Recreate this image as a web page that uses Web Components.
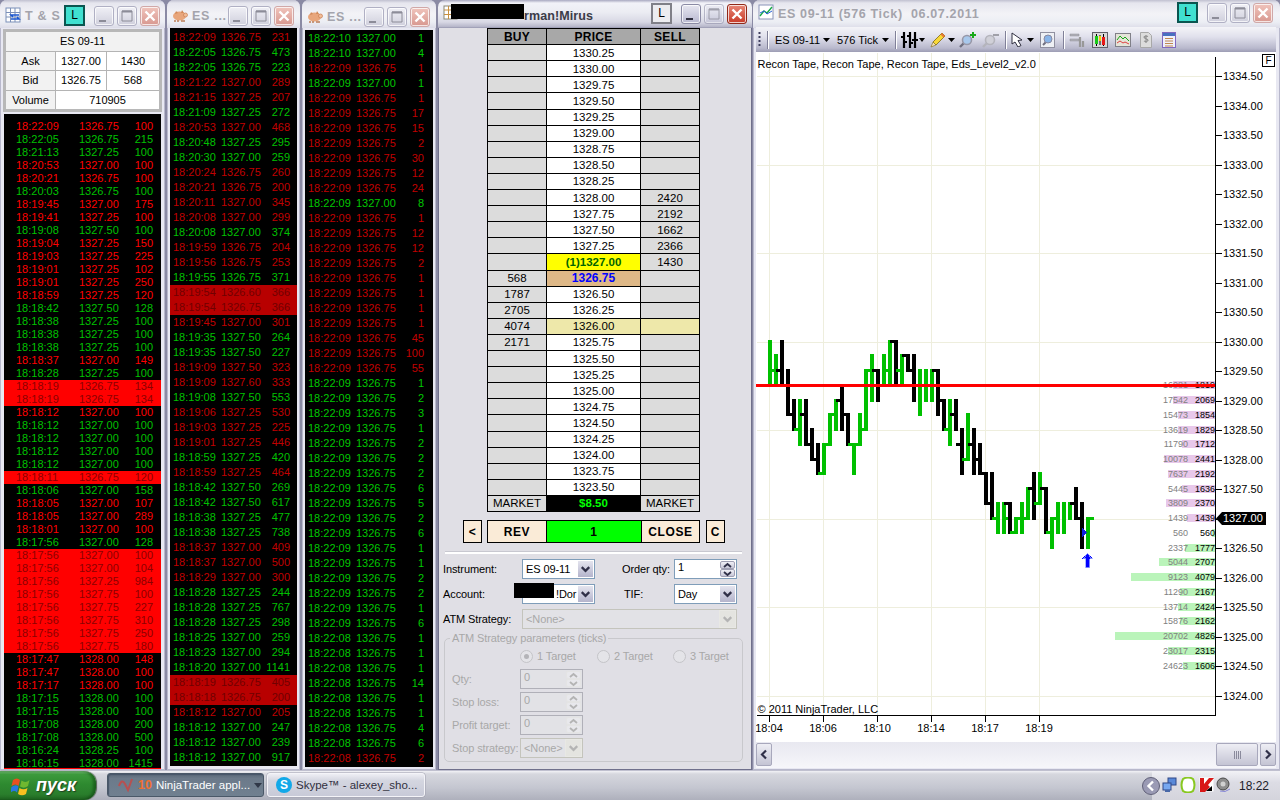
<!DOCTYPE html>
<html lang="ru">
<head>
<meta charset="utf-8">
<title>NinjaTrader</title>
<style>
html,body{margin:0;padding:0;width:1280px;height:800px;overflow:hidden;background:#8a8aa4;font:11px "Liberation Sans",Arial,sans-serif}
#desk{display:flex;height:770px;width:1280px}
</style>
</head>
<body>
<div id="desk">
  <nt-window style="--w:165px;--cap-right:5px;--btn-top:6px;--ls:.7px;--tt:1px" l="cyan" text="T &amp; S">
    <svg slot="icon" width="16" height="16" viewBox="0 0 16 16"><rect x="1" y="1" width="14" height="14" fill="#fff" stroke="#7b8fb8"/><path d="M1 5.500h14M1 10h14M5.500 1v14M10 1v14" stroke="#7b8fb8"/><path d="M6 12h8l-2-2M14 8H6l2 2" stroke="#1a56d0" stroke-width="1.600" fill="none"/></svg>
    <nt-quote></nt-quote>
    <nt-tape src="t1" style="--ml:4px;--mt:2px;--tw:157px;--th:655px;--pl:12px;--pr:8px;--tc:63px;--rh:13px;--pt:6px;--red:#f00;--green:#00c000;--hlb:#f00;--hlf:#8c0000;--bb:1px solid #f00"></nt-tape>
  </nt-window>
  <nt-window style="--w:133px;--cap-right:6px;--btn-top:6px;--ml:2px;--ls:.7px;--tt:1px" text="ES ...">
    <svg slot="icon" width="16" height="16" viewBox="0 0 16 16"><ellipse cx="7.500" cy="9" rx="6.500" ry="4.500" fill="#e8a67c"/><path d="M10 3l2 3-3 0zM4 4l2 2-3 1z" fill="#d08858"/><ellipse cx="13.500" cy="8" rx="2" ry="2" fill="#f2bd98" stroke="#c77c50" stroke-width=".7"/><path d="M3 13v2M6 13v2M10 13v2M12 13v2" stroke="#b8754c" stroke-width="1.400"/></svg>
    <nt-tape src="t2" style="--ml:3px;--mt:0px;--tw:127px;--th:738px;--pl:3px;--pr:7px;--tc:48px;--rh:15px;--pt:1.500px;--red:#c00000;--green:#00c000;--hlb:#b80000;--hlf:#700000"></nt-tape>
  </nt-window>
  <nt-window style="--w:134px;--cap-right:6px;--btn-top:7px;--ml:2px;--ls:.7px;--tt:1px" text="ES ...">
    <svg slot="icon" width="16" height="16" viewBox="0 0 16 16"><ellipse cx="7.500" cy="9" rx="6.500" ry="4.500" fill="#e8a67c"/><path d="M10 3l2 3-3 0zM4 4l2 2-3 1z" fill="#d08858"/><ellipse cx="13.500" cy="8" rx="2" ry="2" fill="#f2bd98" stroke="#c77c50" stroke-width=".7"/><path d="M3 13v2M6 13v2M10 13v2M12 13v2" stroke="#b8754c" stroke-width="1.400"/></svg>
    <nt-tape src="t3" style="--ml:3px;--mt:2px;--tw:128px;--th:737px;--pl:3px;--pr:9px;--tc:48px;--rh:15px;--pt:.5px;--red:#c00000;--green:#00c800"></nt-tape>
  </nt-window>
  <nt-window active style="--w:314px;--cap-right:5px;--btn-top:4px;--ml:2px;--body:#e0dfe5;--tt:0px" l="plain">
    <svg slot="icon" width="16" height="16" viewBox="0 0 16 16"><rect x="1" y="1" width="13" height="13" fill="#fff" stroke="#887"/><path d="M1 5h13M1 9.500h13M5.500 1v13M10 1v13" stroke="#c89040"/></svg>
    <span slot="title" style="display:inline-block;vertical-align:top"><span style="display:inline-block;width:73px;height:15px;background:#000;margin-left:-12px;vertical-align:1px"></span>rman!Mirus</span>
    <nt-ladder></nt-ladder>
    <nt-order></nt-order>
  </nt-window>
  <nt-window style="--w:527px;--cap-right:7px;--btn-top:3px;--ml:1px;--ls:.65px;--tt:2px" l="cyan" text="ES 09-11 (576 Tick)  06.07.2011" >
    <svg slot="icon" width="16" height="16" viewBox="0 0 16 16"><rect x="1" y="1" width="14" height="14" fill="#fff" stroke="#8a94b8"/><path d="M2 12l4-5 3 2 5-6" stroke="#18a848" stroke-width="1.400" fill="none"/><path d="M2 9l4-2 3 3 5-3" stroke="#2860d8" fill="none"/></svg>
    <nt-chart></nt-chart>
  </nt-window>
</div>
<nt-taskbar></nt-taskbar>

<script>
const DATA={
t1:`18:22:09 1326.75 100 r|18:22:05 1326.75 215 g|18:21:13 1327.25 100 g|18:20:53 1327.00 100 r|18:20:21 1326.75 100 r|18:20:03 1326.75 100 g|18:19:45 1327.00 175 r|18:19:41 1327.25 100 r|18:19:08 1327.50 100 g|18:19:04 1327.25 150 r|18:19:03 1327.25 225 r|18:19:01 1327.25 102 r|18:19:01 1327.25 250 r|18:18:59 1327.25 120 r|18:18:42 1327.50 128 g|18:18:38 1327.25 100 g|18:18:38 1327.25 100 g|18:18:38 1327.25 100 g|18:18:37 1327.00 149 r|18:18:28 1327.25 100 g|18:18:19 1326.75 134 h|18:18:19 1326.75 134 h|18:18:12 1327.00 100 r|18:18:12 1327.00 100 g|18:18:12 1327.00 100 g|18:18:12 1327.00 100 g|18:18:12 1327.00 100 g|18:18:11 1326.75 120 h|18:18:06 1327.00 158 g|18:18:05 1327.00 107 r|18:18:05 1327.00 289 r|18:18:01 1327.00 100 r|18:17:56 1327.00 128 g|18:17:56 1327.00 100 h|18:17:56 1327.00 104 h|18:17:56 1327.25 984 h|18:17:56 1327.75 100 h|18:17:56 1327.75 227 h|18:17:56 1327.75 310 h|18:17:56 1327.75 250 h|18:17:56 1327.75 180 h|18:17:47 1328.00 148 r|18:17:47 1328.00 100 r|18:17:17 1328.00 100 r|18:17:15 1328.00 100 g|18:17:15 1328.00 100 g|18:17:08 1328.00 200 g|18:17:08 1328.00 500 g|18:16:24 1328.25 100 g|18:16:15 1328.00 1415 g`,
t2:`18:22:09 1326.75 231 r|18:22:05 1326.75 473 g|18:22:05 1326.75 223 g|18:21:22 1327.00 289 r|18:21:15 1327.25 207 r|18:21:09 1327.25 272 g|18:20:53 1327.00 468 r|18:20:48 1327.25 295 g|18:20:30 1327.00 259 g|18:20:24 1326.75 260 r|18:20:21 1326.75 200 r|18:20:11 1327.00 345 r|18:20:08 1327.00 299 r|18:20:08 1327.00 374 g|18:19:59 1326.75 204 r|18:19:56 1326.75 253 r|18:19:55 1326.75 371 g|18:19:54 1326.60 366 h|18:19:54 1326.75 366 h|18:19:45 1327.00 301 r|18:19:35 1327.50 264 g|18:19:35 1327.50 227 g|18:19:09 1327.50 323 r|18:19:09 1327.60 333 r|18:19:08 1327.50 553 g|18:19:06 1327.25 530 r|18:19:03 1327.25 225 r|18:19:01 1327.25 446 r|18:18:59 1327.25 420 g|18:18:59 1327.25 464 r|18:18:42 1327.50 269 g|18:18:42 1327.50 617 g|18:18:38 1327.25 477 g|18:18:38 1327.25 738 g|18:18:37 1327.00 409 r|18:18:37 1327.00 500 r|18:18:29 1327.00 300 r|18:18:28 1327.25 244 g|18:18:28 1327.25 767 g|18:18:28 1327.25 298 g|18:18:25 1327.00 259 g|18:18:23 1327.00 294 g|18:18:20 1327.00 1141 g|18:18:19 1326.75 405 h|18:18:18 1326.75 200 h|18:18:12 1327.00 205 r|18:18:12 1327.00 247 g|18:18:12 1327.00 239 g|18:18:12 1327.00 917 g`,
t3:`18:22:10 1327.00 1 g|18:22:10 1327.00 4 g|18:22:09 1326.75 1 r|18:22:09 1327.00 1 g|18:22:09 1326.75 1 r|18:22:09 1326.75 17 r|18:22:09 1326.75 15 r|18:22:09 1326.75 2 r|18:22:09 1326.75 30 r|18:22:09 1326.75 12 r|18:22:09 1326.75 24 r|18:22:09 1327.00 8 g|18:22:09 1326.75 1 r|18:22:09 1326.75 12 r|18:22:09 1326.75 12 r|18:22:09 1326.75 2 r|18:22:09 1326.75 1 r|18:22:09 1326.75 1 r|18:22:09 1326.75 1 r|18:22:09 1326.75 1 r|18:22:09 1326.75 45 r|18:22:09 1326.75 100 r|18:22:09 1326.75 55 r|18:22:09 1326.75 1 g|18:22:09 1326.75 2 g|18:22:09 1326.75 3 g|18:22:09 1326.75 1 g|18:22:09 1326.75 2 g|18:22:09 1326.75 2 g|18:22:09 1326.75 2 g|18:22:09 1326.75 6 g|18:22:09 1326.75 5 g|18:22:09 1326.75 2 g|18:22:09 1326.75 6 g|18:22:09 1326.75 1 g|18:22:09 1326.75 1 g|18:22:09 1326.75 2 g|18:22:09 1326.75 2 g|18:22:09 1326.75 1 g|18:22:09 1326.75 6 g|18:22:08 1326.75 1 g|18:22:08 1326.75 1 g|18:22:08 1326.75 1 g|18:22:08 1326.75 14 g|18:22:08 1326.75 1 g|18:22:08 1326.75 1 g|18:22:08 1326.75 4 g|18:22:08 1326.75 6 g|18:22:08 1326.75 2 r`
};

class NtWindow extends HTMLElement{
  constructor(){super();this.attachShadow({mode:'open'});}
  connectedCallback(){
    const active=this.hasAttribute('active');
    const l=this.getAttribute('l');
    const text=this.getAttribute('text')||'';
    const lBtn=l?`<div class="l ${l}">L</div>`:'';
    this.shadowRoot.innerHTML=`<style>
      :host{display:flex;flex-direction:column;flex:none;box-sizing:border-box;width:var(--w);height:770px;margin-left:var(--ml,0);background:var(--body,#e8e8f2);border-radius:7px 7px 0 0;overflow:hidden;box-shadow:inset 0 0 0 1px ${active?'#70708c':'#b8b8cc'};font:11px "Liberation Sans",Arial,sans-serif;color:#000}
      .bar{flex:none;height:28px;box-sizing:border-box;display:flex;align-items:flex-start;padding:var(--btn-top) var(--cap-right) 0 5px;background:${active?'linear-gradient(#a8a8c0 0,#f2f2f8 3px,#ecedf3 12px,#d8d8e4 22px,#b4b4c8 27px,#8f8fa8 28px)':'linear-gradient(#c0c0d0 0,#e6e6ee 3px,#f3f3f7 14px,#eceef4 22px,#dcdce8 28px)'}}
      .ico{flex:none;width:16px;height:16px;margin:1px 4px 0 0;display:block}
      ::slotted(svg){display:block}
      .t{flex:1;min-width:0;margin-top:var(--tt,0);font:bold 12.5px/18px "Liberation Sans",Arial,sans-serif;letter-spacing:var(--ls,.1px);color:${active?'#3c3c48':'#a4a4ac'};white-space:pre;overflow:visible}
      .l{flex:none;box-sizing:border-box;width:21px;height:21px;margin:-1px 6px 0 0;text-align:center;font:12px/17px "Liberation Sans",Arial,sans-serif;border:2px solid #808088;background:#ececf0;color:#000}
      .l.cyan{background:#40e0d0;border-color:#0a5550}
      .b{flex:none;box-sizing:border-box;width:20px;height:20px;margin-left:3px;border-radius:3px;position:relative;border:1px solid ${active?'#8a8aa4':'#b0b0c4'};background:${active?'linear-gradient(#e6e6f0,#b8b8d0)':'linear-gradient(#f0f0f6,#cfcfdc)'};box-shadow:inset 0 0 0 1px rgba(255,255,255,.75)}
      .b svg{position:absolute;left:1px;top:1px}
      .c{border-color:${active?'#902818':'#d0a8a8'};background:${active?'linear-gradient(#e88878,#c83a28)':'linear-gradient(#f0c4bc,#d89890)'}}
      .m.off{opacity:.55}
      .content{flex:1;min-height:0;display:flex;flex-direction:column}
      </style>
      <div class="bar">
        <div class="ico"><slot name="icon"></slot></div>
        <div class="t"><slot name="title">${text.replace(/&/g,'&amp;')}</slot></div>
        ${lBtn}
        <div class="b"><svg width="16" height="16"><rect x="3" y="12" width="7" height="2" fill="${active?'#303040':'#8c8c98'}"/></svg></div>
        <div class="b m ${active?'off':''}"><svg width="16" height="16"><path d="M3 3h10v10H3z" fill="none" stroke="${active?'#606070':'#8c8c98'}"/><path d="M3 3.500h10" stroke="${active?'#606070':'#8c8c98'}" stroke-width="2"/></svg></div>
        <div class="b c"><svg width="16" height="16"><path d="M3.500 3.500l9 9M12.500 3.500l-9 9" stroke="#fff" stroke-width="2.400"/></svg></div>
      </div>
      <div class="content"><slot></slot></div>`;
  }
}
customElements.define('nt-window',NtWindow);

class NtQuote extends HTMLElement{
  constructor(){super();this.attachShadow({mode:'open'}).innerHTML=`<style>
    :host{display:block;flex:none;box-sizing:border-box;width:159px;height:83px;margin:1px 0 0 3px;border:3px solid #b8b8b8;box-shadow:inset 0 0 0 1px #e8e8e8;font:11px "Liberation Sans",Arial,sans-serif}
    .g{display:grid;grid-template-columns:49px 50px 1fr;grid-template-rows:repeat(4,1fr);gap:1px;background:#b4b4b4;height:100%;padding:0 0 0 0}
    .g div{display:flex;align-items:center;justify-content:center;background:#fff;color:#000;white-space:nowrap}
    .g .h{background:#f2f2f2}.s3{grid-column:1/4}.s2{grid-column:2/4}
    </style><div class="g">
    <div class="h s3">ES 09-11</div>
    <div class="h">Ask</div><div>1327.00</div><div>1430</div>
    <div class="h">Bid</div><div>1326.75</div><div>568</div>
    <div class="h">Volume</div><div class="s2">710905</div></div>`;}
}
customElements.define('nt-quote',NtQuote);

class NtTape extends HTMLElement{
  constructor(){super();this.attachShadow({mode:'open'});}
  connectedCallback(){
    const rows=DATA[this.getAttribute('src')].split('|').map(r=>{
      const [t,p,s,f]=r.split(' ');
      return `<div class="row ${f}"><span>${t}</span><span>${p}</span><span class="s">${s}</span></div>`;
    }).join('');
    this.shadowRoot.innerHTML=`<style>
      :host{display:block;flex:none;box-sizing:border-box;margin:var(--mt) 0 0 var(--ml);width:var(--tw);height:var(--th);background:#000;overflow:hidden;padding-top:var(--pt);border-bottom:var(--bb,0);font:11px/var(--rh) "Liberation Sans",Arial,sans-serif}
      .row{display:grid;grid-template-columns:var(--tc) 1fr auto;height:var(--rh);padding:0 var(--pr) 0 var(--pl);white-space:nowrap}
      .s{text-align:right}
      .g{color:var(--green)}.r{color:var(--red)}.h{background:var(--hlb);color:var(--hlf)}
      </style>${rows}`;
  }
}
customElements.define('nt-tape',NtTape);

class NtLadder extends HTMLElement{
  constructor(){super();this.attachShadow({mode:'open'});}
  connectedCallback(){
    const sell={'1328.00':2420,'1327.75':2192,'1327.50':1662,'1327.25':2366,'1327.00':1430};
    const buy={'1326.75':568,'1326.50':1787,'1326.25':2705,'1326.00':4074,'1325.75':2171};
    let h=`<div class="hd">BUY</div><div class="hd">PRICE</div><div class="hd">SELL</div>`;
    for(let i=0;i<28;i++){
      const p=(1330.25-i*.25).toFixed(2);
      let pc='p',pt=p,sc='q';
      if(p==='1327.00'){pc='p ask';pt='(1)1327.00';}
      if(p==='1326.75'){pc='p bid';}
      if(p==='1326.00'){pc='p lvl';sc='q lvl';}
      h+=`<div class="q">${buy[p]||''}</div><div class="${pc}">${pt}</div><div class="${sc}">${sell[p]||''}</div>`;
    }
    h+=`<div class="q">MARKET</div><div class="pnl">$8.50</div><div class="q">MARKET</div>`;
    this.shadowRoot.innerHTML=`<style>
      :host{display:block;flex:none;width:213px;margin:0 0 0 49px;font:11.5px "Liberation Sans",Arial,sans-serif}
      .g{display:grid;box-sizing:border-box;height:484px;grid-template-columns:58px 93px 58px;grid-template-rows:repeat(30,1fr);gap:1px;padding:1px;background:#000}
      .g div{display:flex;align-items:center;justify-content:center;white-space:nowrap;overflow:hidden;color:#000}
      .hd{background:#a8a8a8;font-weight:bold;font-size:12px;letter-spacing:.3px}
      .q{background:#dcdcdc}.p{background:#fff}
      .g .ask{background:#ff0;color:#006400;font-weight:bold}
      .g .bid{background:#deb887;color:#0000ff;font-weight:bold;font-size:12px}
      .lvl.p,.lvl.q{background:#eee8aa}
      .g .pnl{background:#000;color:#00ff00;font-weight:bold}
      </style><div class="g">${h}</div>`;
  }
}
customElements.define('nt-ladder',NtLadder);

class NtOrder extends HTMLElement{
  constructor(){super();this.attachShadow({mode:'open'});}
  connectedCallback(){
    const chev=c=>`<svg width="16" height="12" viewBox="0 0 16 12"><path d="M4 4l4 4 4-4" fill="none" stroke="${c}" stroke-width="2.400"/></svg>`;
    const spin=c=>`<span class="sp"><i><svg width="13" height="7"><path d="M3 5l3.500-3L10 5" fill="none" stroke="${c}" stroke-width="1.800"/></svg></i><i><svg width="13" height="7"><path d="M3 2l3.500 3L10 2" fill="none" stroke="${c}" stroke-width="1.800"/></svg></i></span>`;
    const combo=(t,cls='')=>`<div class="cb ${cls}"><span class="v">${t}</span><span class="dd">${chev(cls?'#b4b4b4':'#303048')}</span></div>`;
    const num=(t,cls='')=>`<div class="cb ${cls}"><span class="v up">${t}</span>${spin(cls?'#b4b4b4':'#303048')}</div>`;
    this.shadowRoot.innerHTML=`<style>
      :host{display:block;flex:none;font:11px "Liberation Sans",Arial,sans-serif;color:#000;letter-spacing:-.1px}
      .act{display:flex;height:23px;margin:8px 0 0 25px}
      .bx{box-sizing:border-box;display:flex;align-items:center;justify-content:center;border:1px solid #000;background:#faebd7;font:bold 12px "Liberation Sans",Arial,sans-serif;letter-spacing:.6px}
      .sep{height:2px;margin:9px 10px 0 7px;background:#fff;box-shadow:0 -1px 0 #c8c8d0}
      .form{display:grid;grid-template-columns:79px 73px 27px 52px 63px;grid-auto-rows:20px;row-gap:5px;align-items:center;margin:5px 0 0 5px}
      .cb{position:relative;box-sizing:border-box;height:20px;display:flex;align-items:stretch;border:1px solid #7f9db9;background:#fff;overflow:hidden}
      .v{flex:1;min-width:0;padding-left:3px;line-height:18px;white-space:nowrap;overflow:hidden}
      .v.up{line-height:15px}
      .dd{flex:none;width:17px;box-sizing:border-box;display:flex;align-items:center;justify-content:center;border:1px solid #fff;background:linear-gradient(#e4e4ee,#b4b4cc)}
      .sp{flex:none;width:17px;display:flex;flex-direction:column;justify-content:center;gap:0}
      .sp i{display:flex;justify-content:center;height:8px;margin:0 1px 0 1px;border:1px solid #a0a0b4;box-sizing:border-box;background:linear-gradient(#f0f0f6,#c8c8d8);border-radius:2px}
      .sp svg{display:block}
      .wide{grid-column:2/6}
      .off{border-color:#c4c4bc;background:#e2e2e6;color:#a8a8a8}
      .off .dd{border-color:#e8e8e4;background:#e4e4e0}
      .off .sp i{border-color:#e4e4e4;background:#e8e8ec}
      .nm{border-color:#b0b0b8}
      .red{position:absolute;z-index:2;width:40px;height:15px;background:#000;left:-8px;top:-1px}
      fieldset{box-sizing:border-box;height:130px;margin:3px 9px 0 6px;padding:0 0 0 7px;border:1px solid #c8c8cc;border-radius:5px;color:#a8a8a8;min-width:0}
      legend{padding:0 2px;margin-left:-2px;line-height:13px}
      .rad{display:flex;height:14px;margin:4px 0 0 68px;align-items:center;line-height:14px}
      .rad span{display:flex;align-items:center;gap:4px;white-space:nowrap}
      .rad b{display:block;box-sizing:border-box;width:13px;height:13px;border:1px solid #c4c4c8;border-radius:50%;background:#e4e4e8;position:relative}
      .rad b.on::after{content:"";position:absolute;left:3px;top:3px;width:5px;height:5px;border-radius:50%;background:#b4b4b8}
      .prm{display:grid;grid-template-columns:68px 63px;grid-auto-rows:20px;row-gap:3px;align-items:center;margin-top:6px}
      </style>
      <div class="act">
        <div class="bx" style="width:19px;margin-right:5px">&lt;</div>
        <div class="bx" style="width:60px">REV</div>
        <div class="bx" style="width:94px;background:#00ff00;border-left:0;border-right:0">1</div>
        <div class="bx" style="width:59px">CLOSE</div>
        <div class="bx" style="width:19px;margin-left:6px">C</div>
      </div>
      <div class="sep"></div>
      <div class="form">
        <span>Instrument:</span>${combo('ES 09-11')}<span></span><span>Order qty:</span>${num('1')}
        <span>Account:</span><div style="position:relative"><div class="red"></div><div class="cb"><span class="v" style="padding-left:33px">!Dor</span><span class="dd">${chev('#303048')}</span></div></div><span></span><span style="padding-left:2px">TIF:</span>${combo('Day')}
        <span>ATM Strategy:</span><div class="wide">${combo('&lt;None&gt;','off')}</div>
      </div>
      <fieldset>
        <legend>ATM Strategy parameters (ticks)</legend>
        <div class="rad">
          <span style="width:77px"><b class="on"></b>1 Target</span>
          <span style="width:76px"><b></b>2 Target</span>
          <span><b></b>3 Target</span>
        </div>
        <div class="prm">
          <span>Qty:</span>${num('0','off nm')}
          <span>Stop loss:</span>${num('0','off nm')}
          <span>Profit target:</span>${num('0','off nm')}
          <span>Stop strategy:</span>${combo('&lt;None&gt;','off')}
        </div>
      </fieldset>`;
  }
}
customElements.define('nt-order',NtOrder);

class NtToolbar extends HTMLElement{
  constructor(){super();this.attachShadow({mode:'open'});}
  connectedCallback(){
    const caret=`<svg width="7" height="4"><path d="M0 0h7L3.500 4z" fill="#000"/></svg>`;
    const sep=`<svg width="2" height="18"><path d="M.5 0v18" stroke="#808098"/><path d="M1.500 0v18" stroke="#fff"/></svg>`;
    const I=(w,h,b)=>`<svg width="${w}" height="${h}" viewBox="0 0 ${w} ${h}">${b}</svg>`;
    const it=[
      [758,3,`<svg width="3" height="16"><path d="M1.500 0v16" stroke="#404060" stroke-width="2" stroke-dasharray="2 2"/></svg>`],
      [767,2,sep],[775,42,'ES 09-11'],[823,7,caret],[837,41,'576 Tick'],[882,7,caret],[895,2,sep],
      [901,17,I(17,16,`<path d="M3 0v16M9 0v16M14 0v16M0 5h3M3 10h3M6 4h3M9 11h3M11 8h6" stroke="#000" stroke-width="2.200"/>`)],
      [919,6,`<svg width="6" height="4"><path d="M0 0h6L3 4z"/></svg>`],
      [930,16,I(16,16,`<path d="M3 10L12 1l3 3-9 9z" fill="#f8d838" stroke="#806810" stroke-width=".8"/><path d="M12 1l3 3-1.500 1.500-3-3z" fill="#e87838"/><path d="M3 10l-2 5 5-2z" fill="#f4e0b8" stroke="#806810" stroke-width=".6"/>`)],
      [948,7,caret],
      [959,17,I(17,16,`<path d="M1 15l5-5" stroke="#707080" stroke-width="2.400"/><circle cx="8" cy="8" r="4.500" fill="#a8c8ec" stroke="#9898a8" stroke-width="1.600"/><path d="M14 0v6M11 3h6" stroke="#18a818" stroke-width="2"/>`)],
      [982,17,I(17,16,`<path d="M1 15l5-5" stroke="#b4b4bc" stroke-width="2.400"/><circle cx="8" cy="8" r="4.500" fill="#d0d0d8" stroke="#b4b4bc" stroke-width="1.600"/><path d="M11 3h6" stroke="#a0a0a8" stroke-width="2"/>`)],
      [1005,2,sep],
      [1011,14,I(14,15,`<path d="M1 1l0 11 3-2 3 5 3-1.500-3-5 4-.500z" fill="#fff" stroke="#303040"/>`)],
      [1027,7,caret],
      [1040,15,I(15,16,`<rect x=".5" y=".5" width="14" height="15" fill="#eef0f4" stroke="#9090a0"/><path d="M3 13l3-3" stroke="#707080" stroke-width="2"/><circle cx="8" cy="7" r="4" fill="#88b4e8" stroke="#8888a0"/>`)],
      [1063,2,sep],
      [1069,16,I(16,16,`<path d="M1 2h9v2H1zM1 7h9v2H1z" fill="#b0b0b8" stroke="#909098" stroke-width=".5"/><path d="M11 5v10M14 9v6" stroke="#989898" stroke-width="2.200"/>`)],
      [1092,16,I(16,16,`<rect x=".5" y=".5" width="15" height="15" fill="#d8d8d8" stroke="#606068"/><path d="M4.500 2v12M11.500 2v12M8 3v10" stroke="#000"/><rect x="3" y="4" width="3" height="8" fill="#18c818"/><rect x="7" y="4" width="2" height="5" fill="#f0d000"/><rect x="10" y="5" width="3" height="8" fill="#e81818"/>`)],
      [1115,16,I(16,16,`<rect x=".5" y="1.500" width="15" height="13" fill="#e4e4d8" stroke="#808088"/><path d="M2 8l3-4 3 3 2-2 4 4" stroke="#18a818" fill="none"/><path d="M2 11l3-2 3 2 2-1 4 2" stroke="#e04040" fill="none"/>`)],
      [1140,12,I(12,16,`<path d="M.5.5h8l3 3v12H.5z" fill="#dcdcdc" stroke="#a8a8a8"/><path d="M8 4.500a2.500 1.500 0 0 0-4 .5c0 2 4 1.500 4 3.500a2.500 1.500 0 0 1-4 .5M6 3v8" fill="none" stroke="#909090" stroke-width="1.200"/>`)],
      [1162,14,I(14,16,`<rect x=".5" y=".5" width="13" height="15" fill="#f0f0fa" stroke="#8068c0"/><rect x="1" y="1" width="12" height="3" fill="#4870c0"/><path d="M3 6.500h8M3 9h8M3 11.500h8M3 14h8" stroke="#c08850"/>`)]
    ];
    let x=756,h='';
    for(const [s,w,c] of it){h+=`<div class="i" style="margin-left:${s-x}px;width:${w}px">${c}</div>`;x=s+w;}
    this.shadowRoot.innerHTML=`<style>
      :host{display:flex;align-items:center;flex:none;height:25px;margin-top:-1px;background:linear-gradient(#f4f4f8,#e0e0ec 40%,#b8b8cc 85%,#9c9cb4);font:11px "Liberation Sans",Arial,sans-serif;white-space:nowrap}
      .i{flex:none;display:flex;align-items:center;justify-content:flex-start}
      svg{display:block}
      </style>${h}`;
  }
}
customElements.define('nt-toolbar',NtToolbar);

class NtChart extends HTMLElement{
  constructor(){super();this.attachShadow({mode:'open'});}
  connectedCallback(){
    const OX=756,OY=52,W=520,H=690;
    const X=x=>x-OX,Y=y=>y-OY;
    const vs=[769,823,877,931,985,1039];
    let grid='';
    for(let k=0;k<8;k++){const y=Math.round(76+88.5*k);grid+=`<rect x="1" y="${Y(y)}" width="458" height="1" fill="#eeeedd"/>`;}
    for(const v of vs)grid+=`<rect x="${X(v)}" y="1" width="1" height="662" fill="#eeeedd"/>`;

    const ladder=[[220,'16081','1819','p'],[218,'17542','2069','p'],[235,'15473','1854','p'],[235,'13619','1829','p'],[245,'11790','1712','p'],[192,'10078','2441','p'],[205,'7637','2192','p'],[245,'5445','1636','p'],[198,'3809','2370','p'],[262,'1439','1439','p'],[335,'560','560','g'],[255,'2337','1777','g'],[177,'5044','2707','g'],[93,'9123','4079','g'],[240,'11290','2167','g'],[235,'13714','2424','g'],[240,'15876','2162','g'],[45,'20702','4826','g'],[205,'23017','2315','g'],[250,'24623','1606','g']];
    let lad='';
    ladder.forEach((r,i)=>{
      const y=385.3+i*14.76,l=1100+r[0]/3;
      lad+=`<div class="bar ${r[3]}" style="left:${X(l)}px;top:${Y(y)-4}px;width:${1215-l}px"></div>`;
      lad+=`<span class="ln" style="top:${Y(y)-6}px">${r[1]}</span><span class="rn" style="top:${Y(y)-6}px">${r[2]}</span>`;
    });

    const B=[['G',0,3,3,2],['G',1,3,2],['K',0,3,2,3],['K',2,5,null,5],['K',4,6,5],['G',4,7,6],['K',4,7,5,7],['K',6,8,null,8],['K',7,9],['G',7,9,9,7],['G',5,7,null,5],['G',4,6],['K',3,6,4,5],['K',5,7],['G',7,9,7,7],['G',5,7,null,6],['G',2,6,null,2],['G',1,4,2],['K',2,4,2],['G',1,3,3,2],['G',0,3],['K',0,3,0],['G',1,3,2,1],['K',1,2,1,2],['K',1,4,2],['G',2,5],['G',2,4],['G',2,4],['K',2,5,2,4],['K',4,6],['G',4,7,6],['K',4,6,5],['K',6,9,7],['G',5,8,8],['K',6,9,7],['K',7,9,8,9],['K',9,11,null,11],['K',9,12],['G',11,13,12],['G',11,13,null,12],['K',11,13,11],['G',12,13,13,12],['G',11,13],['G',10,12,12],['K',9,12,10],['G',9,11,11],['K',10,13,10,13],['G',12,14,13,12],['G',11,13],['G',11,13],['G',11,12],['K',10,12,11,12],['K',11,14],['G',12,14,null,12]];
    const P=l=>341+14.75*l;
    let bars='';
    B.forEach((b,i)=>{
      const x=769+6*i,c=b[0]==='G'?'#00c000':'#000';
      bars+=`<rect x="${X(x)-1}" y="${Y(P(b[1]))-1.5}" width="4" height="${P(b[2])-P(b[1])+3}" fill="${c}"/>`;
      if(b[3]!=null)bars+=`<rect x="${X(x)-5}" y="${Y(P(b[3]))-1.5}" width="6" height="3" fill="${c}"/>`;
      if(b[4]!=null)bars+=`<rect x="${X(x)+1}" y="${Y(P(b[4]))-1.5}" width="6" height="3" fill="${c}"/>`;
    });
    bars+=`<rect x="0" y="${Y(384)}" width="${X(1215)}" height="3" fill="#f00"/>`;
    bars+=`<path d="M${X(1082)} ${Y(528)}l5 4.500-5 4.500z" fill="#1020e0"/>`;
    bars+=`<path d="M${X(1087.5)} ${Y(552.5)}l5 6h-3v9h-4v-9h-3z" fill="#0000ff" stroke="#98a8ff" stroke-width=".8"/>`;

    let axis=`<rect x="${X(1215)}" y="${Y(57)}" width="1" height="${715-57+1}" fill="#000"/><rect x="1" y="${Y(715)}" width="${X(1215)}" height="1" fill="#000"/>`;
    let labs='';
    for(let i=0;i<22;i++){
      const y=76+29.52*i,p=(1334.5-.5*i).toFixed(2);
      axis+=`<rect x="${X(1216)}" y="${Math.round(Y(y))}" width="6" height="1" fill="#000"/>`;
      if(p!=='1327.00')labs+=`<span class="pl" style="top:${Y(y)-7}px">${p}</span>`;
    }
    const times=['18:04','18:06','18:10','18:14','18:17','18:19'];
    vs.forEach((v,i)=>{
      axis+=`<rect x="${X(v)}" y="${Y(716)}" width="1" height="6" fill="#000"/>`;
      labs+=`<span class="tl" style="left:${X(v)-20}px">${times[i]}</span>`;
    });
    this.shadowRoot.innerHTML=`<style>
      :host{display:flex;flex-direction:column;flex:1;min-height:0;margin:0 4px 2px 3px;font:11px "Liberation Sans",Arial,sans-serif;color:#000}
      .area{position:relative;flex:none;width:${W}px;height:${H}px;background:#fff;overflow:hidden}
      svg.l{position:absolute;left:0;top:0;display:block}
      .bar{position:absolute;height:8px}.bar.p{background:#e8c8ea}.bar.g{background:#baf4ba}
      .ln,.rn{position:absolute;font-size:9px;line-height:12px;white-space:nowrap}
      .ln{right:${OX+W-1188}px;color:#808080}
      .rn{right:${OX+W-1215}px;color:#000}
      .pl{position:absolute;left:${X(1223)}px;line-height:14px;white-space:nowrap}
      .tl{position:absolute;top:${Y(721)}px;width:40px;text-align:center;line-height:14px}
      .ti{position:absolute;left:${X(757.5)}px;top:${Y(57)}px;line-height:14px;white-space:nowrap}
      .cp{position:absolute;left:${X(757.5)}px;top:${Y(702)}px;line-height:14px;white-space:nowrap}
      .f{position:absolute;box-sizing:border-box;left:${X(1262)}px;top:${Y(54)}px;width:13px;height:13px;border:1px solid #000;background:#fff;font-size:10px;line-height:11px;text-align:center}
      .mk{position:absolute;left:${X(1216)}px;top:${Y(512)}px;width:50px;height:13px;background:#000;color:#fff;line-height:13px;padding-left:7px;box-sizing:border-box;clip-path:polygon(0 50%,6px 0,100% 0,100% 100%,6px 100%)}
      .sb{flex:none;height:26px;display:flex;align-items:stretch;box-sizing:border-box;padding:1px 0 2px;background:linear-gradient(#e8e8f0,#f6f6fa)}
      .sbb{box-sizing:border-box;border:1px solid #a8a8bc;border-radius:2px;background:linear-gradient(#eeeef4,#c4c4d4);display:flex;align-items:center;justify-content:center}
      </style>
      <nt-toolbar></nt-toolbar>
      <div class="area">
        <svg class="l" width="${W}" height="${H}" shape-rendering="crispEdges">${grid}</svg>
        ${lad}
        <svg class="l" width="${W}" height="${H}" shape-rendering="crispEdges">${bars}${axis}</svg>
        <div class="ti">Recon Tape, Recon Tape, Recon Tape, Eds_Level2_v2.0</div>
        <div class="cp">© 2011 NinjaTrader, LLC</div>
        <div class="f">F</div>
        <div class="mk">1327.00</div>
        ${labs}
      </div>
      <div class="sb">
        <div class="sbb" style="width:16px;margin-left:0"><svg width="10" height="11"><path d="M7 1.500L3 5.500l4 4" fill="none" stroke="#303048" stroke-width="2.200"/></svg></div>
        <div class="sbb" style="width:42px;margin-left:444px"><svg width="9" height="8"><path d="M1.500 0v8M3.500 0v8M5.500 0v8M7.500 0v8" stroke="#8a8a9c"/></svg></div>
        <div class="sbb" style="width:16px;margin-left:2px"><svg width="10" height="11"><path d="M3 1.500l4 4-4 4" fill="none" stroke="#303048" stroke-width="2.200"/></svg></div>
      </div>`;
  }
}
customElements.define('nt-chart',NtChart);

class NtTaskbar extends HTMLElement{
  constructor(){super();this.attachShadow({mode:'open'}).innerHTML=`<style>
    :host{display:flex;box-sizing:border-box;width:1280px;height:30px;background:linear-gradient(#8e8ea8 0,#f2f2f6 1px,#d6d7de 4px,#c4c6d0 18px,#aeb0bc 30px);font:11.500px "Liberation Sans",Arial,sans-serif;align-items:stretch}
    .start{flex:none;width:96px;margin-top:1px;box-sizing:border-box;display:flex;align-items:center;gap:5px;padding-left:11px;border-radius:0 12px 12px 0;background:linear-gradient(#70b870 0,#3c9a3c 12%,#2e8a30 45%,#2a7e2c 80%,#1e6420 100%);color:#fff;font:italic bold 18px "Liberation Sans",Arial,sans-serif;box-shadow:inset -3px 0 3px rgba(0,40,0,.4),1px 0 1px #506050;text-shadow:1px 1px 1px #204020}
    .start svg{display:block;flex:none}
    .it{flex:none;box-sizing:border-box;height:24px;margin-top:3px;display:flex;align-items:center;white-space:nowrap;border-radius:3px}
    .a{margin-left:11px;width:157px;padding-left:10px;background:linear-gradient(#5a6878,#6c7a8a 20%,#708090);color:#fff;border:1px solid #4a5868;box-shadow:inset 1px 1px 1px #48566a}
    .a b{color:#f07030;margin:0 4px 0 3px;font-size:12.500px}
    .a i{margin-left:auto;margin-right:1px;width:0;height:0;border-left:4px solid transparent;border-right:4px solid transparent;border-top:5px solid #303848}
    .a .nm{flex:none;width:96px;overflow:hidden;text-overflow:clip}
    .s{margin-left:3px;width:158px;padding-left:8px;gap:4px;background:linear-gradient(#eeeef4,#d4d6e0 30%,#c8cad8);color:#303040;border:1px solid #f4f4f8;box-shadow:0 0 0 .5px #a0a0b0}
    .sk{flex:none;width:16px;height:16px;border-radius:50%;background:#12a8e8;color:#fff;font:bold 12px/16px "Liberation Sans",Arial,sans-serif;text-align:center}
    .tray{margin-left:auto;width:128px;flex:none;display:flex;align-items:center;background:linear-gradient(#f2f2f6,#dcdce4 40%,#d4d4dc);margin-top:1px;position:relative}
    .tray svg{display:block;flex:none}
    .ck{position:absolute;left:-10px;top:6px}
    .clk{position:absolute;left:87px;top:9px;font-size:12px;color:#202028;line-height:13px}
    .tic{position:absolute;top:6px}
    </style>
    <div class="start">
      <svg width="20" height="20" viewBox="0 0 20 20"><path d="M2 4q4-3 7 0l-1.500 6q-3-3-7 0z" fill="#e85020"/><path d="M10.500 4.500q4 3 8-.5l-1.500 6q-4 3-8 .5z" fill="#70b830"/><path d="M.5 11q4-3 7-.5l-1.500 6q-3-3-7 .5z" fill="#2878e0"/><path d="M8.500 12q4 2.500 8 0l-1.500 6q-4 2.500-8 0z" fill="#f8c020"/></svg>
      <span>пуск</span>
    </div>
    <div class="it a">
      <svg width="17" height="16" viewBox="0 0 17 16" style="flex:none"><path d="M1 9q3-8 6-2l3 6 4-11" fill="none" stroke="#b85050" stroke-width="2"/></svg>
      <b>10</b><span class="nm">NinjaTrader appl...</span><i></i>
    </div>
    <div class="it s"><span class="sk">S</span><span>Skype™ - alexey_sho...</span></div>
    <div class="tray">
      <svg class="ck" width="18" height="18"><circle cx="9" cy="9" r="8.500" fill="#9a9ab4" stroke="#606078"/><path d="M11 4.500L6.500 9l4.500 4.500" fill="none" stroke="#fff" stroke-width="2.400"/></svg>
      <svg class="tic" style="left:10px" width="15" height="16" viewBox="0 0 15 16"><rect x="6" y="1" width="8" height="7" fill="#5888d8" stroke="#304888"/><rect x="1" y="6" width="8" height="7" fill="#78a8f0" stroke="#304888"/><path d="M3 14h5" stroke="#4868a8" stroke-width="2"/></svg>
      <svg class="tic" style="left:28px" width="16" height="16" viewBox="0 0 16 16"><path d="M3 2q5-3 10 0q3 6 0 12q-5 3-10 0q-3-6 0-12z" fill="#fff" stroke="#88c820" stroke-width="2"/></svg>
      <svg class="tic" style="left:47px" width="15" height="16" viewBox="0 0 15 16"><rect x=".5" y=".5" width="14" height="14" fill="#fff"/><path d="M1 1h4v6l5-6h5l-6 7 2 2-5 5H5l-4 0z" fill="#d81818"/><path d="M7 14l6-5v5z" fill="#000"/></svg>
      <svg class="tic" style="left:64px" width="16" height="16" viewBox="0 0 16 16"><circle cx="7" cy="7" r="6" fill="#8c8c8c" stroke="#484848"/><circle cx="7" cy="7" r="2.500" fill="#d0d0d0"/><path d="M4 14q5 2 10-2" stroke="#8888d8" fill="none"/></svg>
      <span class="clk">18:22</span>
    </div>`;}
}
customElements.define('nt-taskbar',NtTaskbar);
</script>
</body>
</html>
